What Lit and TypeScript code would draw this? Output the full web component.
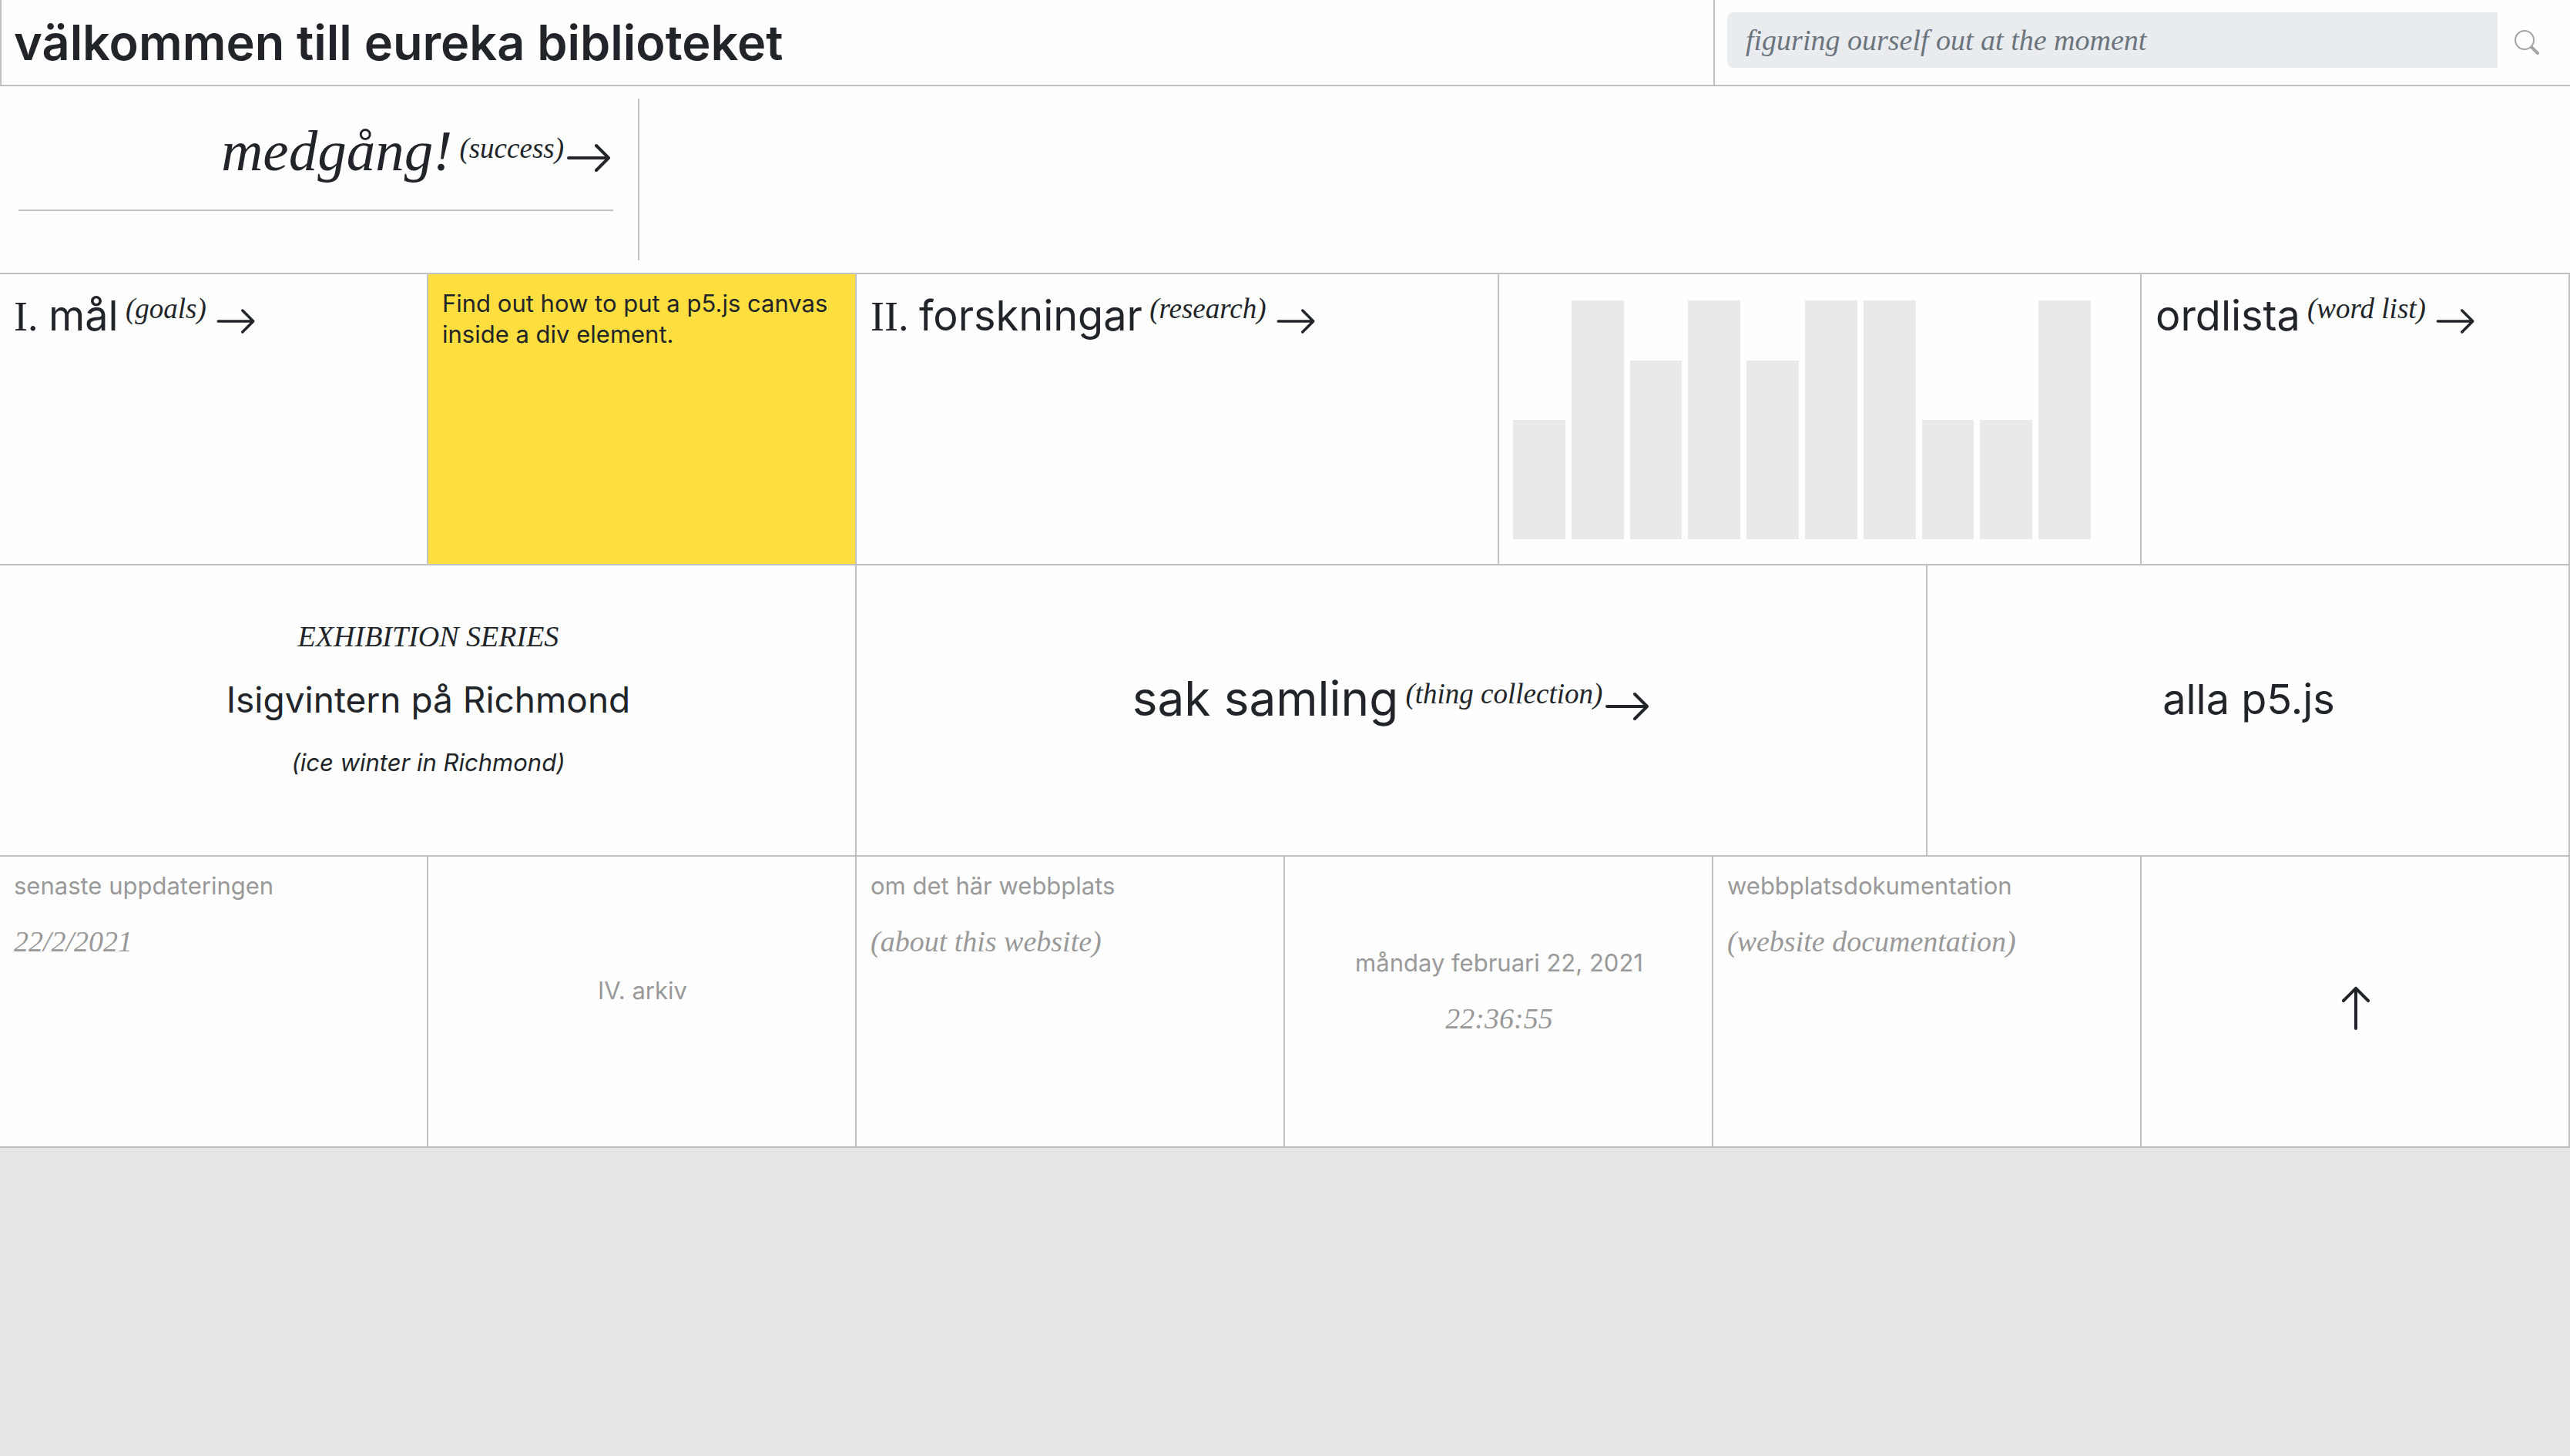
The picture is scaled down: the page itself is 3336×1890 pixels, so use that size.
import { LitElement, html, css, svg } from "lit";
import { customElement } from "lit/decorators.js";

const ARROW_RIGHT =
  "M1 8a.5.5 0 0 1 .5-.5h11.793l-3.147-3.146a.5.5 0 0 1 .708-.708l4 4a.5.5 0 0 1 0 .708l-4 4a.5.5 0 0 1-.708-.708L13.293 8.5H1.5A.5.5 0 0 1 1 8z";
const ARROW_UP =
  "M8 15a.5.5 0 0 0 .5-.5V2.707l3.146 3.147a.5.5 0 0 0 .708-.708l-4-4a.5.5 0 0 0-.708 0l-4 4a.5.5 0 1 0 .708.708L7.5 2.707V14.5a.5.5 0 0 0 .5.5z";
const SEARCH = [
  "M10.442 10.442a1 1 0 0 1 1.415 0l3.85 3.85a1 1 0 0 1-1.414 1.415l-3.85-3.85a1 1 0 0 1 0-1.415z",
  "M6.5 12a5.5 5.5 0 1 0 0-11 5.5 5.5 0 0 0 0 11zM13 6.5a6.5 6.5 0 1 1-13 0 6.5 6.5 0 0 1 13 0z",
];

const icon = (name: string, ...paths: string[]) => html`<svg class="icon ${name}" viewBox="0 0 16 16" fill="currentColor" aria-hidden="true">
    ${paths.map((d) => svg`<path fill-rule="evenodd" d=${d}></path>`)}
  </svg>`;

/** Bar heights, in steps out of MAX_STEP. */
const BARS = [2, 4, 3, 4, 3, 4, 4, 2, 2, 4];
const MAX_STEP = 4;

@customElement("app-root")
export class AppRoot extends LitElement {
  static styles = css`
    :host {
      --line: 2px solid #c0c0c0;
      --serif: "Liberation Serif", "Times New Roman", serif;
      display: block;
      min-height: 100vh;
      background: #e5e5e5;
      color: #212529;
      font: 31px/40px Inter, "Open Sans", sans-serif;
    }
    * {
      box-sizing: border-box;
    }
    h1, h2, h3, p {
      margin: 0;
      font-weight: 400;
    }
    a {
      color: inherit;
      text-decoration: none;
    }
    .header, .feature, .row {
      display: grid;
      background: #fefefe;
    }
    .header {
      grid-template-columns: 2fr 1fr;
      border-bottom: var(--line);
    }
    .brand {
      padding: 16px;
      border-left: var(--line);
    }
    .brand-title {
      font-size: 63px;
      line-height: 78px;
      font-weight: 600;
    }
    .search {
      display: flex;
      align-items: center;
      padding: 16px;
      border-left: var(--line);
    }
    .search-input {
      flex: 1;
      align-self: flex-start;
      min-width: 0;
      height: 72px;
      padding: 0 24px;
      border: 0;
      border-radius: 8px 0 0 8px;
      background: #e9ecef;
      color: #6c757d;
      font: italic 38px/40px var(--serif);
    }
    .search-input::placeholder {
      color: #6c757d;
      opacity: 1;
    }
    .search-button {
      display: flex;
      padding: 0 24px 0 22px;
      border: 0;
      background: none;
      color: #a0a4a7;
    }
    .feature {
      grid-template-columns: calc(25% - 4px) 1fr;
      padding: 16px 0;
      border-bottom: var(--line);
    }
    .feature-card {
      padding: 24px 32px 64px 24px;
      border-right: var(--line);
      text-align: right;
    }
    .feature-title {
      margin-bottom: 32px;
      font: italic 75px/88px var(--serif);
    }
    .rule {
      margin: 0;
      border: 0;
      border-top: var(--line);
    }
    .row {
      grid-template-columns: repeat(12, minmax(0, 1fr));
    }
    .cell {
      min-height: 378px;
      padding: 18px 16px 14px 18px;
      border-right: var(--line);
      border-bottom: var(--line);
    }
    .span-2 { grid-column: span 2; }
    .span-3 { grid-column: span 3; }
    .span-4 { grid-column: span 4; }
    .span-5 { grid-column: span 5; }
    .center {
      display: flex;
      flex-direction: column;
      align-items: center;
      justify-content: center;
      text-align: center;
    }
    .note {
      background: #ffde3f;
    }
    .muted {
      color: #999;
    }
    .text, .title, .subtitle, .large {
      margin-bottom: 32px;
    }
    .title {
      font-size: 54px;
      line-height: 72px;
    }
    .large {
      font-size: 62px;
      line-height: 78px;
    }
    .subtitle {
      font-size: 46px;
      line-height: 60px;
    }
    .slanted {
      font-style: italic;
    }
    .serif {
      font-family: var(--serif);
    }
    .serif-italic {
      font: italic 38px/40px var(--serif);
    }
    .gloss {
      font: italic 37px/1 var(--serif);
      line-height: 0;
      vertical-align: 16px;
    }
    .icon {
      width: 64px;
      height: 64px;
    }
    .arrow {
      vertical-align: -20px;
    }
    .feature-title .arrow {
      vertical-align: -16px;
    }
    .title .arrow {
      width: 56px;
      height: 56px;
      margin-left: 10px;
      vertical-align: -16px;
    }
    .icon.glass {
      width: 32px;
      height: 32px;
    }
    .up-link {
      display: flex;
      padding-top: 14px;
    }
    .chart-cell {
      display: grid;
      padding: 34px 64px 32px 18px;
    }
    .chart {
      display: grid;
      grid-template-columns: repeat(10, 1fr);
      gap: 8px;
      align-items: end;
    }
    .bar {
      background: #e9e9e9;
    }
  `;

  render() {
    return html`
      <header class="header">
        <div class="brand"><h1 class="brand-title">välkommen till eureka biblioteket</h1></div>
        <form class="search" role="search" @submit=${(e: Event) => e.preventDefault()}>
          <input class="search-input" type="text" aria-label="figuring ourself out at the moment"
            placeholder="figuring ourself out at the moment" />
          <button class="search-button" type="submit" aria-label="sök">${icon("glass", ...SEARCH)}</button>
        </form>
      </header>

      <section class="feature">
        <div class="feature-card">
          <h2 class="feature-title"><a href="#medgang">medgång!<span class="gloss"> (success)</span>${icon("arrow", ARROW_RIGHT)}</a></h2>
          <hr class="rule" />
        </div>
      </section>

      <section class="row">
        <div class="cell span-2">
          <h2 class="title"><a href="#mal"><span class="serif">I. </span>mål<span class="gloss"> (goals)</span>${icon("arrow", ARROW_RIGHT)}</a></h2>
        </div>
        <div class="cell span-2 note">
          <p class="text">Find out how to put a p5.js canvas inside a div element.</p>
        </div>
        <div class="cell span-3">
          <h2 class="title"><a href="#forskningar"><span class="serif">II. </span>forskningar<span class="gloss"> (research)</span>${icon("arrow", ARROW_RIGHT)}</a></h2>
        </div>
        <div class="cell span-3 chart-cell">
          <div class="chart" role="img" aria-label="p5.js">
            ${BARS.map((n) => html`<div class="bar" style="height:${(n / MAX_STEP) * 100}%"></div>`)}
          </div>
        </div>
        <div class="cell span-2">
          <h2 class="title"><a href="#ordlista">ordlista<span class="gloss"> (word list)</span>${icon("arrow", ARROW_RIGHT)}</a></h2>
        </div>
      </section>

      <section class="row">
        <div class="cell span-4 center">
          <p class="text serif-italic">EXHIBITION SERIES</p>
          <h3 class="subtitle"><a href="#isigvintern">Isigvintern på Richmond</a></h3>
          <p class="text slanted">(ice winter in Richmond)</p>
        </div>
        <div class="cell span-5 center">
          <h2 class="large"><a href="#samling">sak samling<span class="gloss"> (thing collection)</span>${icon("arrow", ARROW_RIGHT)}</a></h2>
        </div>
        <div class="cell span-3 center">
          <h2 class="title"><a href="#p5">alla p5.js</a></h2>
        </div>
      </section>

      <footer class="row">
        <div class="cell span-2 muted">
          <p class="text">senaste uppdateringen</p>
          <p class="text serif-italic">22/2/2021</p>
        </div>
        <div class="cell span-2 muted center">
          <p class="text"><a href="#arkiv">IV. arkiv</a></p>
        </div>
        <div class="cell span-2 muted">
          <p class="text"><a href="#om">om det här webbplats</a></p>
          <p class="text serif-italic">(about this website)</p>
        </div>
        <div class="cell span-2 muted center">
          <p class="text">månday februari 22, 2021</p>
          <p class="text serif-italic">22:36:55</p>
        </div>
        <div class="cell span-2 muted">
          <p class="text"><a href="#dokumentation">webbplatsdokumentation</a></p>
          <p class="text serif-italic">(website documentation)</p>
        </div>
        <div class="cell span-2 center">
          <a class="up-link" href="#" aria-label="upp">${icon("up", ARROW_UP)}</a>
        </div>
      </footer>
    `;
  }
}
